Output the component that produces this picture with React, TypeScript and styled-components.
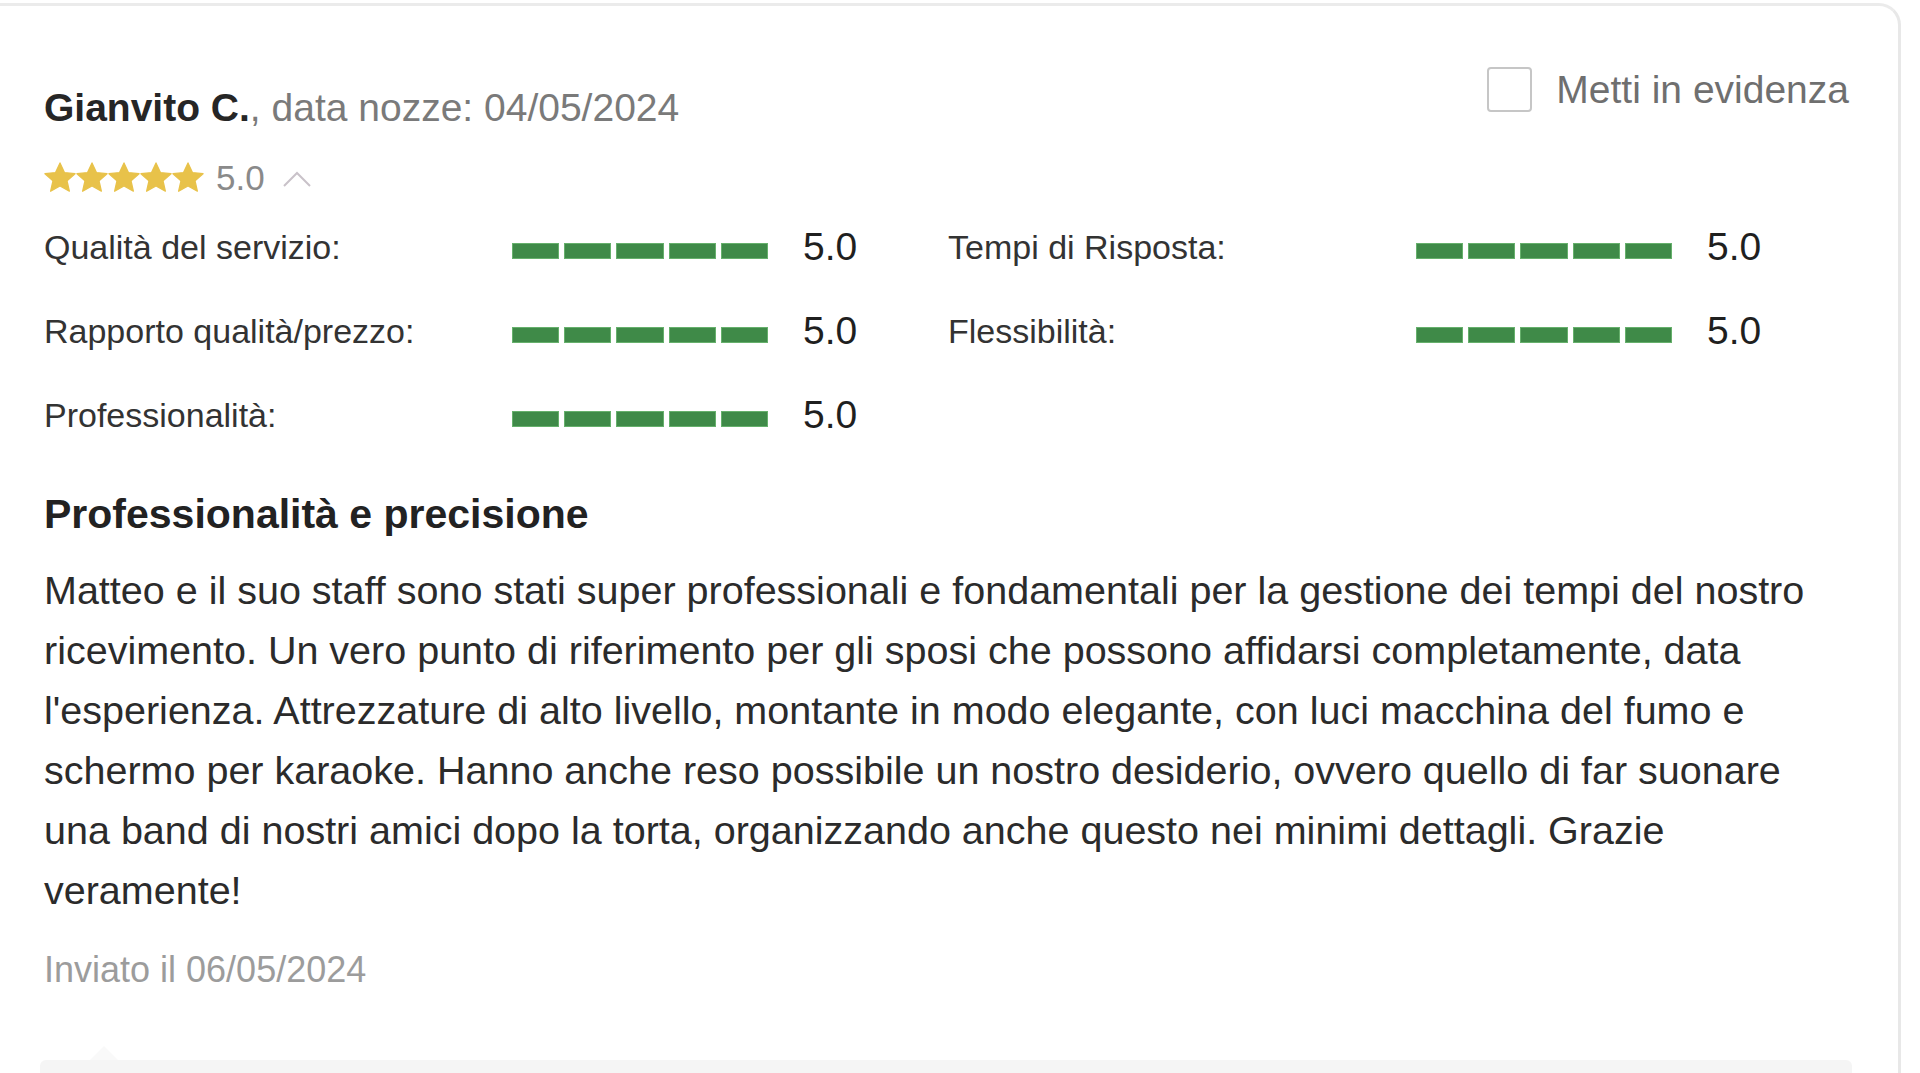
import React from 'react';
import styled, { createGlobalStyle } from 'styled-components';

const GlobalStyle = createGlobalStyle`
  html, body {
    margin: 0;
    padding: 0;
    background: #ffffff;
    overflow: hidden;
  }
  body {
    font-family: 'Liberation Sans', Arial, sans-serif;
    color: #2e2e2e;
  }
`;

const Page = styled.div`
  padding-top: 3px;
  height: 1070px;
  overflow: hidden;
`;

const Card = styled.article`
  margin-right: 19px;
  min-height: 1100px;
  padding: 61px 44px 0 44px;
  border-top: 3px solid #ebebeb;
  border-right: 3px solid #e8e8e8;
  border-top-right-radius: 22px;
  background: #ffffff;
`;

const Header = styled.div`
  display: flex;
  justify-content: space-between;
  align-items: flex-start;
`;

const Reviewer = styled.div`
  margin-top: 17px;
  font-size: 39px;
  line-height: 48px;
  color: #7a7a7a;
`;

const Name = styled.span`
  font-weight: 700;
  color: #262626;
`;

const Highlight = styled.label`
  display: flex;
  align-items: center;
  gap: 24px;
  margin-right: 5px;
  font-size: 39px;
  line-height: 44px;
  color: #6f6f6f;
  cursor: pointer;
`;

const Box = styled.span`
  box-sizing: border-box;
  width: 45px;
  height: 45px;
  border: 2px solid #c6c6c6;
  border-radius: 4px;
  background: #ffffff;
`;

const Summary = styled.div`
  display: flex;
  align-items: center;
  height: 40px;
  margin-top: 26px;
`;

const Stars = styled.div`
  display: flex;
`;

const Score = styled.span`
  margin-left: 12px;
  font-size: 35px;
  line-height: 40px;
  color: #8a8a8a;
`;

const Toggle = styled.span`
  display: flex;
  margin-left: 17px;
  margin-top: 2px;
`;

const Ratings = styled.div`
  display: grid;
  grid-template-columns: 904px 1fr;
  row-gap: 40px;
  margin-top: 27px;
`;

const RatingRow = styled.div`
  display: flex;
  align-items: center;
  height: 44px;
`;

const Label = styled.span`
  width: 468px;
  font-size: 34px;
  line-height: 44px;
  color: #333333;
`;

const Bar = styled.div`
  display: flex;
  gap: 5px;
  width: 256px;
  margin-top: 8px;
`;

const Segment = styled.span<{ $on: boolean }>`
  flex: 1;
  height: 16px;
  box-sizing: border-box;
  background: ${p => (p.$on ? '#3f8a48' : '#e3e3e3')};
  border: 1px solid ${p => (p.$on ? '#66b06c' : '#d6d6d6')};
`;

const Value = styled.span`
  margin-left: 35px;
  font-size: 39px;
  line-height: 44px;
  color: #1f1f1f;
`;

const Title = styled.h3`
  margin: 52px 0 0;
  font-size: 41px;
  line-height: 50px;
  font-weight: 700;
  color: #222222;
`;

const Body = styled.p`
  max-width: 1790px;
  margin: 21px 0 0;
  font-size: 39.5px;
  line-height: 60px;
  color: #2b2b2b;
`;

const Sent = styled.div`
  margin-top: 28px;
  font-size: 36px;
  line-height: 44px;
  color: #9c9c9c;
`;

const Reply = styled.div`
  position: relative;
  height: 120px;
  margin: 68px 2px 0 -4px;
  border-radius: 6px;
  background: #f5f5f5;

  &::before {
    content: '';
    position: absolute;
    top: -14px;
    left: 50px;
    border-left: 14px solid transparent;
    border-right: 14px solid transparent;
    border-bottom: 14px solid #f9f9f9;
  }
`;

const Star = () => (
  <svg width="32" height="32" viewBox="1.6 1.6 20.8 20.8">
    <path
      d="M12 2.2l2.9 6.3 6.9.7-5.2 4.6 1.5 6.8L12 17.1l-6.1 3.5 1.5-6.8-5.2-4.6 6.9-.7z"
      fill="#e8c24a"
      stroke="#e8c24a"
      strokeWidth="0.8"
      strokeLinejoin="round"
    />
  </svg>
);

const ChevronUp = () => (
  <svg width="30" height="18" viewBox="0 0 30 18">
    <polyline points="2,16 15,3 28,16" fill="none" stroke="#c9c2c9" strokeWidth="2" />
  </svg>
);

interface RatingProps {
  label: string;
  score: number;
}

const Rating = ({ label, score }: RatingProps) => (
  <RatingRow>
    <Label>{label}</Label>
    <Bar>
      {[1, 2, 3, 4, 5].map(i => (
        <Segment key={i} $on={i <= Math.round(score)} />
      ))}
    </Bar>
    <Value>{score.toFixed(1)}</Value>
  </RatingRow>
);

const ratings = [
  { label: 'Qualità del servizio:', score: 5 },
  { label: 'Tempi di Risposta:', score: 5 },
  { label: 'Rapporto qualità/prezzo:', score: 5 },
  { label: 'Flessibilità:', score: 5 },
  { label: 'Professionalità:', score: 5 },
];

const App = () => {
  return (
    <>
      <GlobalStyle />
      <Page>
        <Card>
          <Header>
            <Reviewer>
              <Name>Gianvito C.</Name>, data nozze: 04/05/2024
            </Reviewer>
            <Highlight>
              <Box />
              Metti in evidenza
            </Highlight>
          </Header>

          <Summary>
            <Stars>
              {[0, 1, 2, 3, 4].map(i => (
                <Star key={i} />
              ))}
            </Stars>
            <Score>5.0</Score>
            <Toggle>
              <ChevronUp />
            </Toggle>
          </Summary>

          <Ratings>
            {ratings.map(r => (
              <Rating key={r.label} label={r.label} score={r.score} />
            ))}
          </Ratings>

          <Title>Professionalità e precisione</Title>
          <Body>
            Matteo e il suo staff sono stati super professionali e fondamentali per la gestione dei
            tempi del nostro ricevimento. Un vero punto di riferimento per gli sposi che possono
            affidarsi completamente, data l'esperienza. Attrezzature di alto livello, montante in
            modo elegante, con luci macchina del fumo e schermo per karaoke. Hanno anche reso
            possibile un nostro desiderio, ovvero quello di far suonare una band di nostri amici
            dopo la torta, organizzando anche questo nei minimi dettagli. Grazie veramente!
          </Body>
          <Sent>Inviato il 06/05/2024</Sent>

          <Reply />
        </Card>
      </Page>
    </>
  );
};

export default App;
